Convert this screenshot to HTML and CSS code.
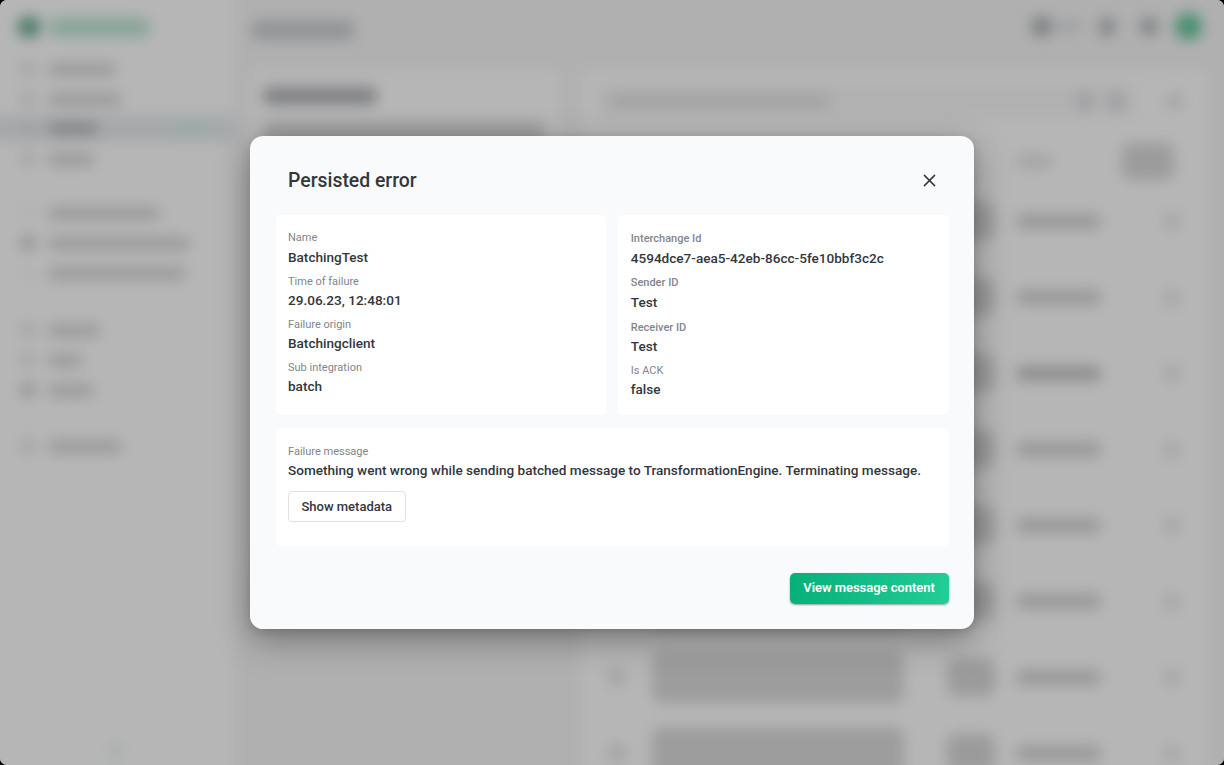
FILE: index.html
```html
<!DOCTYPE html>
<html lang="en">
<head>
<meta charset="utf-8">
<title>Persisted error</title>
<link rel="stylesheet" href="styles.css">
</head>
<body>
<div class="window">
  <div class="app" aria-hidden="true">
    <aside class="sidebar">
      <div class="brand"><i class="brand-mark"></i><i class="brand-name"></i></div>
      <nav class="nav">
        <div class="item"><i class="ico"></i><i class="bar" style="width:68px"></i></div>
        <div class="item"><i class="ico"></i><i class="bar" style="width:74px"></i></div>
        <div class="item active"><i class="ico"></i><i class="bar" style="width:50px"></i><i class="tag"></i></div>
        <div class="item"><i class="ico"></i><i class="bar" style="width:46px"></i></div>
        <div class="item group"><i class="ico faint"></i><i class="bar" style="width:112px"></i></div>
        <div class="item"><i class="ico solid"></i><i class="bar" style="width:142px"></i></div>
        <div class="item"><i class="ico faint"></i><i class="bar" style="width:138px"></i></div>
        <div class="item group second"><i class="ico"></i><i class="bar" style="width:52px"></i></div>
        <div class="item"><i class="ico"></i><i class="bar" style="width:34px"></i></div>
        <div class="item"><i class="ico solid"></i><i class="bar" style="width:46px"></i></div>
        <div class="item group third"><i class="ico"></i><i class="bar" style="width:74px"></i></div>
      </nav>
      <i class="collapse"></i>
    </aside>
    <main class="main">
      <header class="top">
        <i class="page-title"></i>
        <div class="tools"><i class="dot"></i><i class="lang"></i><i class="dot bell"></i><i class="dot help"></i><i class="avatar"></i></div>
      </header>
      <div class="columns">
        <section class="panel intro"><i class="heading"></i><i class="copy"></i></section>
        <section class="panel list">
          <div class="search"><div class="field-box"><i class="hint"></i><i class="dot pale"></i><i class="dot pale"></i></div><i class="dot pale end"></i></div>
          <div class="row head"><i></i><i></i><i></i><i class="bar type"></i><i class="action"></i></div>
          <div class="row"><i class="check"></i><i class="text"></i><i class="date"></i><i class="bar status"></i><i class="more"></i></div>
          <div class="row"><i class="check"></i><i class="text"></i><i class="date"></i><i class="bar status"></i><i class="more"></i></div>
          <div class="row"><i class="check"></i><i class="text"></i><i class="date"></i><i class="bar status strong"></i><i class="more"></i></div>
          <div class="row"><i class="check"></i><i class="text"></i><i class="date"></i><i class="bar status"></i><i class="more"></i></div>
          <div class="row"><i class="check"></i><i class="text"></i><i class="date"></i><i class="bar status"></i><i class="more"></i></div>
          <div class="row"><i class="check"></i><i class="text"></i><i class="date"></i><i class="bar status"></i><i class="more"></i></div>
          <div class="row"><i class="check"></i><i class="text"></i><i class="date"></i><i class="bar status"></i><i class="more"></i></div>
          <div class="row"><i class="check"></i><i class="text"></i><i class="date"></i><i class="bar status"></i><i class="more"></i></div>
        </section>
      </div>
    </main>
  </div>

  <div class="overlay">
    <div class="modal" role="dialog" aria-labelledby="title">
      <div class="modal-head">
        <h1 id="title">Persisted error</h1>
        <button class="close" aria-label="Close"><svg width="13" height="13" viewBox="0 0 13 13"><path d="M1.4 1.4 11.6 11.6M11.6 1.4 1.4 11.6"/></svg></button>
      </div>
      <div class="details">
        <dl class="card">
          <div class="field roomy"><dt>Name</dt><dd>BatchingTest</dd></div>
          <div class="field"><dt>Time of failure</dt><dd>29.06.23, 12:48:01</dd></div>
          <div class="field"><dt>Failure origin</dt><dd>Batchingclient</dd></div>
          <div class="field"><dt>Sub integration</dt><dd>batch</dd></div>
        </dl>
        <dl class="card ids">
          <div class="field roomy bold"><dt>Interchange Id</dt><dd>4594dce7-aea5-42eb-86cc-5fe10bbf3c2c</dd></div>
          <div class="field roomy bold"><dt>Sender ID</dt><dd>Test</dd></div>
          <div class="field bold receiver"><dt>Receiver ID</dt><dd>Test</dd></div>
          <div class="field"><dt>Is ACK</dt><dd>false</dd></div>
        </dl>
      </div>
      <div class="card message">
        <dl class="field"><dt>Failure message</dt><dd>Something went wrong while sending batched message to TransformationEngine. Terminating message.</dd></dl>
        <button class="btn outline">Show metadata</button>
      </div>
      <div class="modal-foot"><button class="btn primary">View message content</button></div>
    </div>
  </div>
</div>
</body>
</html>
```
FILE: styles.css
```css
* { box-sizing: border-box; }
html { background: #000; }
body { margin: 0; font-family: Roboto, "Liberation Sans", sans-serif; color: #33373c; }
dl, dd, h1 { margin: 0; }
i { display: block; flex: none; }
button { font-family: inherit; cursor: pointer; }

.window { position: relative; width: 1224px; height: 765px; border-radius: 7px; overflow: hidden; background: #b0b0b0; }

/* Application behind the dialog */
.app { display: flex; width: 1224px; height: 765px; filter: blur(7px); }
.sidebar { width: 234px; height: 765px; background: #b6b6b6; box-shadow: -20px 0 #b6b6b6, 0 20px #b6b6b6, 0 -20px #b6b6b6, -20px 20px #b6b6b6, -20px -20px #b6b6b6; }
.brand { display: flex; align-items: center; gap: 9px; height: 54px; padding-left: 18px; }
.brand-mark { width: 22px; height: 20px; background: #4f7d6a; border-radius: 6px; }
.brand-name { width: 101px; height: 19px; border-radius: 8px; background: #88a599; }
.item { display: flex; align-items: center; height: 30px; padding-left: 20px; gap: 12px; }
.ico { width: 16px; height: 16px; background: #a5a5a5; border-radius: 50%; }
.ico.solid { background: #959595; }
.ico.faint { background: #b2b2b2; }
.bar { height: 13px; border-radius: 6px; background: #9a9a9a; }
.item.active { background: #a5a9ac; height: 27px; margin: 1px 0 2px; box-shadow: -20px 0 #a5a9ac; }
.active .bar { background: #84868a; }
.active .ico { background: #9fa2a4; }
.active .tag { width: 26px; height: 10px; margin-left: 68px; background: #92aca1; }
.item.group { margin-top: 24px; }
.item.second { margin-top: 27px; }
.item.third { margin-top: 26px; }
.collapse { width: 16px; height: 16px; margin: 282px 0 0 108px; background: #a6b0ac; border-radius: 50%; }

.main { flex: 1; background: #b0b0b0; box-shadow: 20px 0 #b0b0b0, 0 20px #b0b0b0, 0 -20px #b0b0b0, 20px -20px #b0b0b0; }
.top { display: flex; justify-content: space-between; align-items: center; height: 70px; padding: 0 22px 17px 17px; }
.page-title { width: 104px; height: 20px; margin-top: 6px; border-radius: 8px; background: #929497; }
.tools { display: flex; align-items: center; }
.dot { width: 21px; height: 21px; border-radius: 50%; background: #7d7f82; }
.lang { width: 25px; height: 11px; margin-left: 4px; background: #9d9fa1; }
.dot.bell { width: 18px; height: 20px; margin-left: 17px; background: #838588; }
.dot.help { width: 20px; height: 19px; margin-left: 23px; background: #838588; }
.avatar { width: 27px; height: 27px; margin-left: 16px; border-radius: 50%; background: #479070; }
.columns { display: flex; gap: 20px; padding-left: 16px; }
.panel { height: 720px; background: #b6b6b6; }
.intro { width: 310px; padding: 17px 13px; background: linear-gradient(#b6b6b6 85%, #b0b0b0) no-repeat 0 0 / 100% 560px #b0b0b0; }
.heading { width: 114px; height: 18px; border-radius: 7px; background: #818285; }
.copy { width: 282px; height: 22px; margin-top: 17px; border-radius: 6px; background: #9b9b9b; }
.list { width: 628px; }
.search { display: flex; align-items: center; justify-content: space-between; height: 48px; padding: 14px 25px 0 18px; }
.field-box { display: flex; align-items: center; width: 536px; height: 34px; padding: 0 9px 0 10px; background: #b1b1b2; }
.hint { width: 222px; height: 12px; margin-right: auto; border-radius: 6px; background: #a0a0a1; }
.dot.pale { width: 18px; height: 18px; margin-left: 13px; background: #9b9c9e; }
.dot.pale.end { width: 17px; height: 17px; background: #a4a4a5; }
.row { display: grid; grid-template-columns: 18px 250px 50px 86px 20px; column-gap: 18px; align-items: center; height: 76px; padding-left: 28px; }
.row > :nth-child(2) { margin-left: 8px; }
.row > :nth-child(3) { margin-left: 35px; }
.row > :nth-child(4) { margin-left: 36px; }
.row > :nth-child(5) { margin-left: 79px; }
.head { height: 86px; margin-bottom: -21px; }
.row > .type { width: 36px; background: #a3a3a3; }
.row > .action { width: 52px; height: 37px; margin-left: 38px; border-radius: 8px; background: #9c9c9c; }
.status { width: 85px; height: 15px; background: #989898; }
.status.strong { background: #8d8d8d; }
.more { width: 17px; height: 19px; border-radius: 50%; background: #a6a6a6; }
.check { width: 18px; height: 20px; border-radius: 50%; background: #a3a3a3; }
.text { width: 252px; height: 52px; border-radius: 9px; background: #9d9d9d; }
.date { width: 48px; height: 38px; border-radius: 9px; background: #9b9b9b; }

/* Dialog */
.overlay { position: absolute; inset: 0; display: flex; align-items: center; justify-content: center; }
.modal { width: 724px; height: 493px; padding: 0 25px 0 25.5px; border-radius: 13px; background: #f9fafc; box-shadow: 0 11px 34px rgba(0,0,0,.34), 0 3px 10px rgba(0,0,0,.12); }
.modal-head { display: flex; align-items: center; justify-content: space-between; height: 79px; padding: 10px 13px 0 12.5px; }
h1 { font-size: 19.4px; font-weight: 500; line-height: 24px; }
.close { display: flex; padding: 0; border: 0; background: none; }
.close svg { fill: none; stroke: #33373c; stroke-width: 1.5; stroke-linecap: round; }
.details { display: grid; grid-template-columns: 1fr 1fr; gap: 12px; }
.card { padding: 15px 12.5px 0; border-radius: 5px; background: #fff; }
.details .card { height: 200px; }
.details .ids { padding-top: 16px; }
.field { display: grid; row-gap: 1px; margin-bottom: 6px; }
.field.roomy { row-gap: 2px; }
.field.receiver { margin-top: 7px; }
dt { font-size: 11px; line-height: 16px; color: #81868c; }
.bold dt { font-weight: 500; }
dd { padding-bottom: 2px; font-size: 13.57px; font-weight: 500; line-height: 18px; white-space: nowrap; }
.message { height: 118px; margin-top: 13px; padding-top: 16px; }
.btn { height: 31px; border-radius: 4px; font-size: 13px; font-weight: 500; white-space: nowrap; }
.outline { width: 117.5px; margin-top: 4px; padding: 0; border: 1px solid #dfe1e4; background: #fff; color: #33373c; }
.modal-foot { display: flex; justify-content: flex-end; padding-top: 27px; }
.primary { width: 159px; padding: 0 1px 2px 0; border: 0; border-radius: 5px; font-weight: 600; letter-spacing: -.04px; color: #fff; background: linear-gradient(100deg, #07af79, #22cd98); box-shadow: 0 1px 2px rgba(20,80,60,.5); }
```
